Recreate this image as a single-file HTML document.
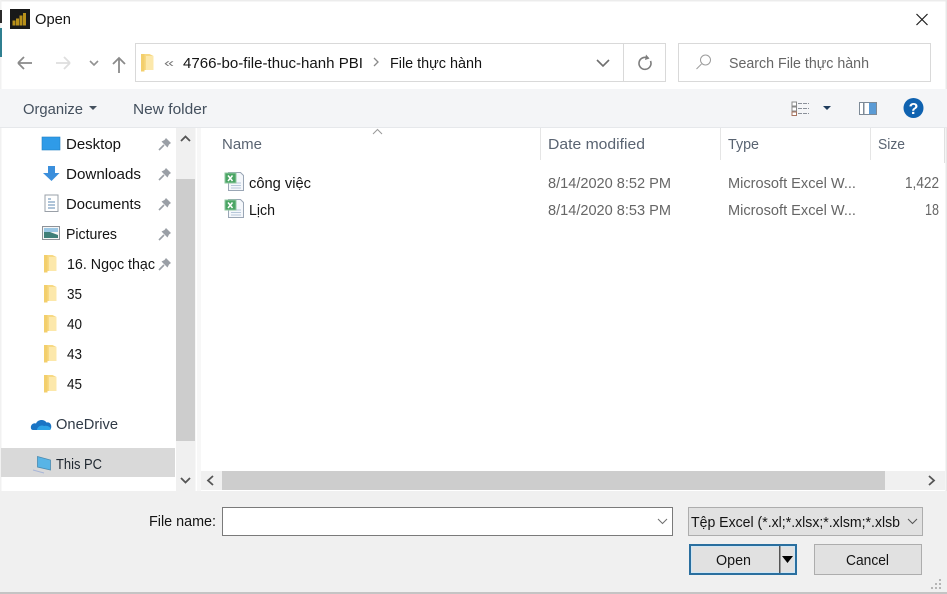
<!DOCTYPE html>
<html lang="en">
<head>
<meta charset="utf-8">
<title>Open</title>
<style>
html,body{margin:0;padding:0;background:#fff;width:947px;height:594px;overflow:hidden}
svg{display:block}
text{font-family:"Liberation Sans","Noto Sans CJK SC",sans-serif;font-size:14.5px;fill:#141414}
.g{fill:#666}
.h{fill:#5a6472}
.b{fill:#44505e}
.s{font-size:15.5px}
</style>
</head>
<body>
<svg width="947" height="594" viewBox="0 0 947 594" xmlns="http://www.w3.org/2000/svg">
<defs>
<g id="fold">
  <path d="M0 1h8.500l4 2v14H3l-3 1.500z" fill="#f7d983"/>
  <path d="M5 3h7.500v14H5z" fill="#fce8ab"/>
  <path d="M0 1h3.500v17.500H0z" fill="#f3cf6c"/>
</g>
<g id="pin">
  <path d="M1 13l5-5" stroke="#9a9fa6" stroke-width="1.600" fill="none"/>
  <path d="M8 1l5 5-2 1.500-1.500 3-6-6 3-1.500z" fill="#9a9fa6"/>
</g>
<g id="xls">
  <path d="M3.500 .500h12l3 3v15h-15z" fill="#f4f7fb" stroke="#9aa6b5"/>
  <path d="M6 11h10M6 13.500h10M6 16h10" stroke="#b7c7da"/>
  <rect x="0" y="1" width="11" height="10" fill="#4aa564" stroke="#8fc79f"/>
  <path d="M3 3.500l4.500 5.500M7.500 3.500l-4.500 5.500" stroke="#fff" stroke-width="1.500"/>
</g>
</defs>

<!-- base -->
<rect width="947" height="594" fill="#fff"/>
<rect width="947" height="1.500" fill="#ececec"/>
<rect x="0" y="0" width="1.500" height="594" fill="#f1f1f1"/>
<rect x="0" y="10" width="2" height="13" fill="#2b2b2b"/>
<rect x="0" y="28" width="2" height="29" fill="#2f7f90"/>
<rect x="945.500" y="0" width="1.500" height="594" fill="#e8e8e8"/>

<!-- title -->
<rect x="10" y="9" width="20" height="20" fill="#191919"/>
<path d="M12.500 25.500v-5h3v5zM16 25.500v-7h3v7zM19.500 25.500v-10h3v10zM23 25.500v-12.500h3v12.500z" fill="#b8901a"/>
<text x="35" y="24" textLength="36" lengthAdjust="spacingAndGlyphs">Open</text>
<path d="M916.500 14l11 11M927.500 14l-11 11" stroke="#1c1c1c" stroke-width="1.200" fill="none"/>

<!-- nav buttons -->
<path d="M18 63h14M18 63l6-6M18 63l6 6" stroke="#8a8a8a" stroke-width="1.800" fill="none"/>
<path d="M70 63H56M70 63l-6-6M70 63l-6 6" stroke="#dedede" stroke-width="1.800" fill="none"/>
<path d="M90 61l4 4 4-4" stroke="#929292" stroke-width="1.600" fill="none"/>
<path d="M119 73V58M113 64l6-6 6 6" stroke="#8a8a8a" stroke-width="1.800" fill="none"/>

<!-- address -->
<rect x="135.500" y="43.500" width="530" height="38" fill="#fff" stroke="#d9d9d9"/>
<line x1="623.500" y1="43" x2="623.500" y2="82" stroke="#d9d9d9"/>
<use href="#fold" x="141" y="53"/>
<text x="164" y="67" textLength="10" lengthAdjust="spacingAndGlyphs" style="font-size:12px;fill:#777">«</text>
<text x="183" y="68" textLength="180" lengthAdjust="spacingAndGlyphs">4766-bo-file-thuc-hanh PBI</text>
<path d="M374 58l4 4-4 4" stroke="#8a8a8a" stroke-width="1.300" fill="none"/>
<text x="390" y="68" textLength="92" lengthAdjust="spacingAndGlyphs">File thực hành</text>
<path d="M597 60l6 6 6-6" stroke="#6f6f6f" stroke-width="1.600" fill="none"/>
<path d="M650.500 61a6 6 0 1 1-2-2.500" stroke="#7d7d7d" stroke-width="1.600" fill="none"/>
<path d="M646 54.500l3.500 4-4.500 1.500z" fill="#7d7d7d"/>

<!-- search -->
<rect x="678.500" y="43.500" width="252" height="38" fill="#fff" stroke="#d9d9d9"/>
<circle cx="705.500" cy="60" r="5" fill="none" stroke="#9c9c9c"/>
<line x1="701.500" y1="64" x2="696.500" y2="69" stroke="#9c9c9c"/>
<text x="729" y="68" textLength="140" lengthAdjust="spacingAndGlyphs" class="g">Search File thực hành</text>

<!-- toolbar -->
<rect x="0" y="89" width="947" height="38" fill="#f4f5f7"/>
<rect x="0" y="127" width="947" height="1" fill="#e6e8eb"/>
<text x="23" y="114" textLength="60" lengthAdjust="spacingAndGlyphs" class="b">Organize</text>
<path d="M89 106h8l-4 4z" fill="#44505e"/>
<text x="133" y="114" textLength="74" lengthAdjust="spacingAndGlyphs" class="b">New folder</text>
<g fill="none">
  <rect x="792" y="102" width="4.500" height="4" stroke="#8a8a8a" fill="#fff"/>
  <rect x="792" y="107" width="4.500" height="4" stroke="#8a8a8a" fill="#fff"/>
  <rect x="792" y="112" width="4.500" height="3.500" stroke="#a5735f" fill="#fff"/>
  <path d="M798 103.500h11M798 108.500h11M798 113.500h11" stroke="#8a9099" stroke-dasharray="4 1"/>
</g>
<path d="M823 106h8l-4 4z" fill="#1f3b5c"/>
<rect x="859.500" y="102.500" width="17" height="12" fill="#fff" stroke="#7d8a97"/>
<rect x="869" y="103" width="7" height="11" fill="#5b9bd5"/>
<rect x="863" y="103" width="1.500" height="11" fill="#7d8a97"/>
<circle cx="913.500" cy="108" r="10" fill="#0f62b0"/>
<text x="913.500" y="114" text-anchor="middle" style="font-size:16px;font-weight:bold;fill:#fff">?</text>

<!-- nav pane -->
<rect x="1" y="448" width="174" height="29" fill="#d9d9d9"/>
<rect x="176" y="128" width="19" height="363" fill="#f0f0f0"/>
<rect x="176" y="179" width="19" height="262" fill="#cdcdcd"/>
<path d="M181 141l4.500-4.500 4.500 4.500" stroke="#555" stroke-width="1.800" fill="none"/>
<path d="M181 478l4.500 4.500 4.500-4.500" stroke="#555" stroke-width="1.800" fill="none"/>
<rect x="195" y="128" width="1" height="363" fill="#f7f7f7"/>
<rect x="197" y="128" width="4" height="363" fill="#f7f7f7"/>

<!-- nav icons -->
<rect x="42" y="137" width="18" height="13" fill="#2f9be8" stroke="#2080c4" stroke-width=".6"/>
<path d="M48 166h7v7h4.500L51.500 181 43 173h5z" fill="#3b8fdc"/>
<rect x="45" y="195" width="13" height="16.500" fill="#fff" stroke="#9aa0a8"/>
<path d="M48 199h3M48 202h7M48 205h7M48 208h7" stroke="#5f89b0"/>
<rect x="42.500" y="226.500" width="17" height="13" fill="#f6f6f6" stroke="#8d9298"/>
<path d="M44 228h14v4H44z" fill="#9bc7e4"/>
<path d="M44 232l6 0 8 3v3H44z" fill="#3f7f78"/>
<use href="#pin" x="158" y="137"/>
<use href="#pin" x="158" y="167"/>
<use href="#pin" x="158" y="197"/>
<use href="#pin" x="158" y="227"/>
<use href="#pin" x="158" y="257"/>
<use href="#fold" x="44" y="254"/>
<use href="#fold" x="44" y="284"/>
<use href="#fold" x="44" y="314"/>
<use href="#fold" x="44" y="344"/>
<use href="#fold" x="44" y="374"/>
<path d="M31 428.500c-1-4 3-6 5-5 1.500-4 8-5 10.500-1 4-1 5.500 3 4.500 6 0 0-.5 1.500-2 1.500H33c-1 0-2-1-2-1.500z" fill="#1a74c4"/>
<path d="M37 430c0-3 4-5.500 7-4 3-1 6.500 1 7 3 0 0-.5 1-2 1z" fill="#2ea3e6"/>
<path d="M37.500 456.500l13 3.500v10l-13-3z" fill="#58b4e6" stroke="#4a8bb0" stroke-width=".8"/>
<path d="M33 470l11 3" stroke="#a8b6d8"/>

<!-- nav text -->
<text x="66" y="149" textLength="55" lengthAdjust="spacingAndGlyphs">Desktop</text>
<text x="66" y="179" textLength="75" lengthAdjust="spacingAndGlyphs">Downloads</text>
<text x="66" y="209" textLength="75" lengthAdjust="spacingAndGlyphs">Documents</text>
<text x="66" y="239" textLength="51" lengthAdjust="spacingAndGlyphs">Pictures</text>
<text x="67" y="269" textLength="88" lengthAdjust="spacingAndGlyphs">16. Ngọc thạc</text>
<text x="67" y="299" textLength="15" lengthAdjust="spacingAndGlyphs">35</text>
<text x="67" y="329" textLength="15" lengthAdjust="spacingAndGlyphs">40</text>
<text x="67" y="359" textLength="15" lengthAdjust="spacingAndGlyphs">43</text>
<text x="67" y="389" textLength="15" lengthAdjust="spacingAndGlyphs">45</text>
<text x="56" y="429" textLength="62" lengthAdjust="spacingAndGlyphs" style="fill:#303a46">OneDrive</text>
<text x="56" y="469" textLength="46" lengthAdjust="spacingAndGlyphs" style="font-size:15px;fill:#1f2730">This PC</text>

<!-- columns -->
<path d="M373 134l4.500-4.500 4.500 4.500" stroke="#9a9a9a" fill="none"/>
<path d="M540.500 128v32M720.500 128v32M870.500 128v32" stroke="#e5e5e5"/>
<rect x="944" y="128" width="1" height="35" fill="#e0e0e0"/>
<text x="222" y="149" textLength="40" lengthAdjust="spacingAndGlyphs" class="h">Name</text>
<text x="548" y="149" textLength="97" lengthAdjust="spacingAndGlyphs" class="h">Date modified</text>
<text x="728" y="149" textLength="31" lengthAdjust="spacingAndGlyphs" class="h">Type</text>
<text x="878" y="149" textLength="27" lengthAdjust="spacingAndGlyphs" class="h">Size</text>

<!-- files -->
<use href="#xls" x="225" y="172"/>
<use href="#xls" x="225" y="199"/>
<text x="249" y="188" textLength="62" lengthAdjust="spacingAndGlyphs">công việc</text>
<text x="249" y="215" textLength="26" lengthAdjust="spacingAndGlyphs">Lịch</text>
<text x="548" y="188" textLength="123" lengthAdjust="spacingAndGlyphs" class="g">8/14/2020 8:52 PM</text>
<text x="548" y="215" textLength="123" lengthAdjust="spacingAndGlyphs" class="g">8/14/2020 8:53 PM</text>
<text x="728" y="188" textLength="128" lengthAdjust="spacingAndGlyphs" class="g">Microsoft Excel W...</text>
<text x="728" y="215" textLength="128" lengthAdjust="spacingAndGlyphs" class="g">Microsoft Excel W...</text>
<text x="905" y="188" textLength="34" lengthAdjust="spacingAndGlyphs" class="g s">1,422</text>
<text x="925" y="215" textLength="14" lengthAdjust="spacingAndGlyphs" class="g s">18</text>

<!-- h scrollbar -->
<rect x="201" y="471" width="744" height="19" fill="#f0f0f0"/>
<rect x="222" y="471" width="663" height="19" fill="#cdcdcd"/>
<path d="M213 476l-5 4.500 5 4.500" stroke="#555" stroke-width="1.800" fill="none"/>
<path d="M929 476l5 4.500-5 4.500" stroke="#555" stroke-width="1.800" fill="none"/>

<!-- bottom panel -->
<rect x="0" y="491" width="947" height="101" fill="#f0f0f0"/>
<rect x="0" y="592" width="947" height="2" fill="#c4c4c4"/>
<text x="149" y="526" textLength="67" lengthAdjust="spacingAndGlyphs">File name:</text>
<rect x="222.500" y="507.500" width="450" height="28" fill="#fff" stroke="#7a7a7a"/>
<path d="M658 519l4.500 4.500 4.500-4.500" stroke="#6f6f6f" fill="none"/>
<rect x="688.500" y="507.500" width="234" height="28" fill="#e1e1e1" stroke="#adadad"/>
<text x="691" y="527" textLength="209" lengthAdjust="spacingAndGlyphs">Tệp Excel (*.xl;*.xlsx;*.xlsm;*.xlsb</text>
<path d="M908 519l4.500 4.500 4.500-4.500" stroke="#555" fill="none"/>
<rect x="690" y="545" width="106" height="29" fill="#e1e1e1" stroke="#2a6f9f" stroke-width="2"/>
<rect x="691.500" y="546.500" width="103" height="26" fill="none" stroke="#cfe6f5"/>
<rect x="779" y="546" width="1.500" height="27" fill="#555"/>
<path d="M782 556h11l-5.500 7z" fill="#000"/>
<text x="716" y="565" textLength="35" lengthAdjust="spacingAndGlyphs">Open</text>
<rect x="814.500" y="544.500" width="107" height="30" fill="#e1e1e1" stroke="#adadad"/>
<text x="846" y="565" textLength="43" lengthAdjust="spacingAndGlyphs">Cancel</text>
<g fill="#b5b5b5">
  <rect x="939" y="579" width="2" height="2"/>
  <rect x="935" y="583" width="2" height="2"/><rect x="939" y="583" width="2" height="2"/>
  <rect x="931" y="587" width="2" height="2"/><rect x="935" y="587" width="2" height="2"/><rect x="939" y="587" width="2" height="2"/>
</g>
</svg>
</body>
</html>
